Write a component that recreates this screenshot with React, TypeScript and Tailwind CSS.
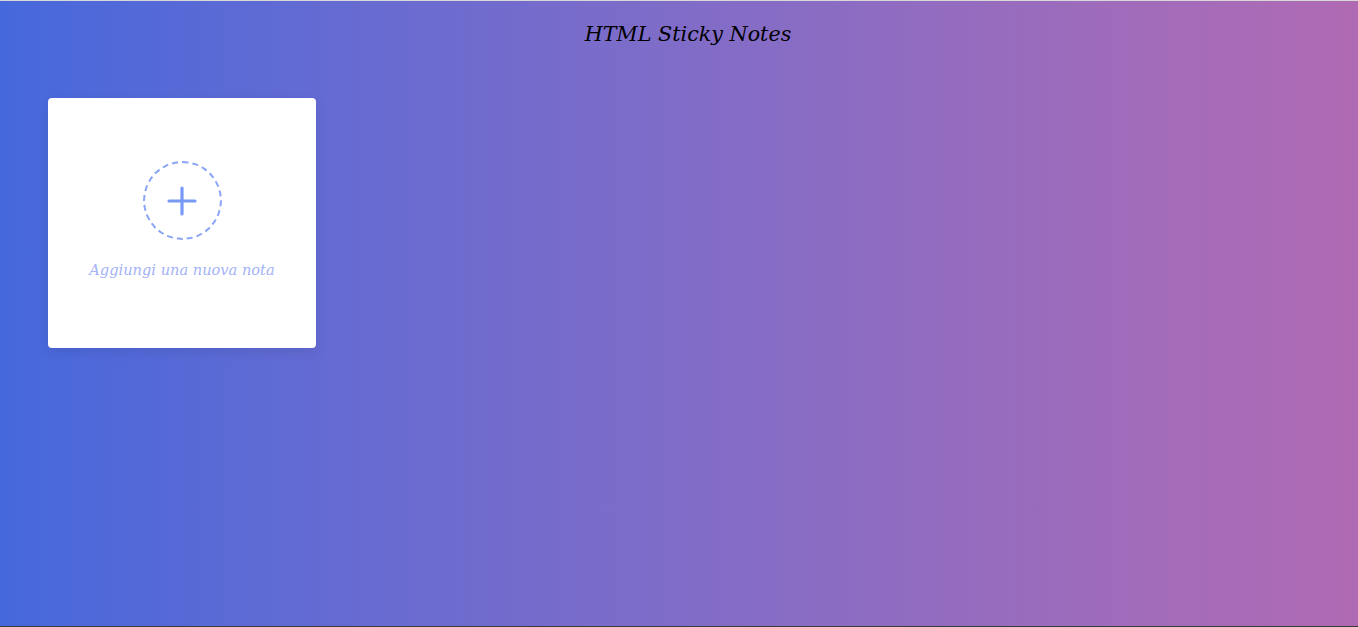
import React from 'react'

export default function App() {
  return (
    <div
      className="min-h-screen w-full bg-gradient-to-r from-[#4568dc] to-[#b06ab3] border-t border-[#d8d8d8] border-b border-b-[#3a3a3a]"
      style={{ fontFamily: '"DejaVu Serif", "Liberation Serif", serif' }}
    >
      <h1 className="pt-[18px] pl-[18px] text-center text-[20.7px] italic text-black leading-[30px]">HTML Sticky Notes</h1>

      <div className="mt-[49px] px-[48px] flex">
        <button className="w-[268px] h-[250px] bg-white rounded-[4px] shadow-[0_4px_12px_rgba(0,0,0,0.08)] flex flex-col items-center pt-[63px]">
          <div className="w-[79px] h-[79px] rounded-full border-2 border-dashed border-[#8aa4f6] flex items-center justify-center">
            <svg width="30" height="30" viewBox="0 0 30 30">
              <path d="M15 2v26M2 15h26" stroke="#789af6" strokeWidth="3.2" strokeLinecap="round" />
            </svg>
          </div>
          <span className="mt-[19px] text-[14.6px] italic text-[#a4b2f7]">Aggiungi una nuova nota</span>
        </button>
      </div>
    </div>
  )
}
